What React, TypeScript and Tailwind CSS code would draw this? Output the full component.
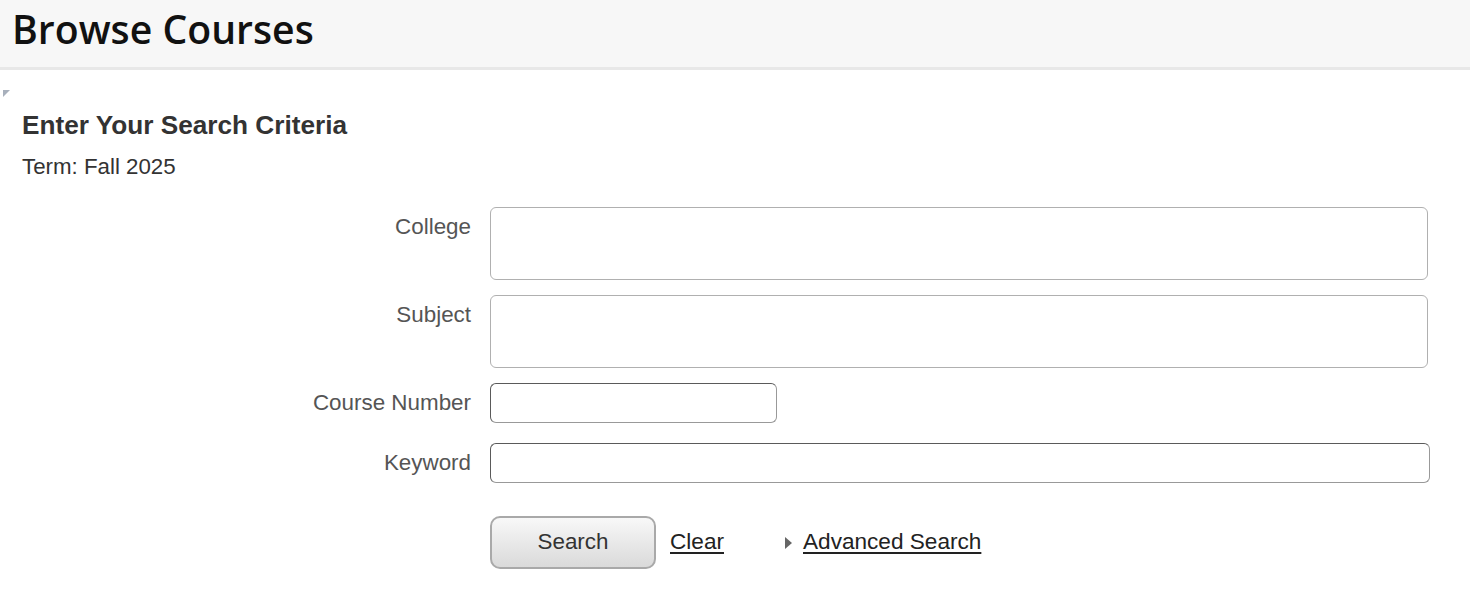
import React from 'react';

const labelCls = "w-[471px] shrink-0 text-right text-[22.4px] text-[#555] font-['Liberation_Sans',Arial,sans-serif]";

export default function App() {
  return (
    <div className="min-h-[598px] bg-white font-['Liberation_Sans',Arial,sans-serif] text-[#333]">
      {/* Header */}
      <div className="h-[70px] bg-[#f7f7f7] border-b-[3px] border-[#e8e8e8] pl-[12px] flex items-center">
        <h1 className="font-['Open_Sans',sans-serif] font-semibold text-[39.2px] text-[#111] leading-none -mt-[10px]">
          Browse Courses
        </h1>
      </div>

      <div className="relative pt-[40px]">
        <div className="absolute left-[3px] top-[20px] w-0 h-0 border-t-[7px] border-r-[7px] border-t-[#a8b0bc] border-r-transparent" />

        <h2 className="pl-[22px] text-[26.2px] font-bold text-[#333] leading-[30px]">Enter Your Search Criteria</h2>
        <p className="pl-[22px] mt-[14px] text-[22.3px] text-[#333] leading-[26px]">Term: Fall 2025</p>

        {/* Form */}
        <div className="mt-[27px] flex flex-col">
          <div className="flex items-start">
            <label className={`${labelCls} pt-[3px]`}>College</label>
            <div className="ml-[19px] w-[938px] h-[73px] border border-[#b0b0b0] rounded-[6px]" />
          </div>
          <div className="flex items-start mt-[15px]">
            <label className={`${labelCls} pt-[3px]`}>Subject</label>
            <div className="ml-[19px] w-[938px] h-[73px] border border-[#b0b0b0] rounded-[6px]" />
          </div>
          <div className="flex items-center mt-[15px]">
            <label className={labelCls}>Course Number</label>
            <input className="ml-[19px] w-[287px] h-[40px] border border-[#5a5a5a] border-r-[#999] border-b-[#999] rounded-[6px] outline-none" />
          </div>
          <div className="flex items-center mt-[20px]">
            <label className={labelCls}>Keyword</label>
            <input className="ml-[19px] w-[940px] h-[40px] border border-[#5a5a5a] border-r-[#999] border-b-[#999] rounded-[6px] outline-none" />
          </div>

          {/* Actions */}
          <div className="flex items-center ml-[490px] mt-[33px]">
            <button className="w-[166px] h-[53px] pb-[2px] rounded-[10px] border-2 border-[#a9a9a9] bg-gradient-to-b from-[#f8f8f8] to-[#dadada] text-[22.4px] text-[#333]">
              Search
            </button>
            <a href="#" className="ml-[14px] -mt-[2px] text-[22.6px] text-[#222] underline underline-offset-[3px]">Clear</a>
            <span className="ml-[61px] w-0 h-0 border-y-[6px] border-y-transparent border-l-[7px] border-l-[#666]" />
            <a href="#" className="ml-[11px] -mt-[2px] text-[22.6px] text-[#222] underline underline-offset-[3px]">Advanced Search</a>
          </div>
        </div>
      </div>
    </div>
  );
}
